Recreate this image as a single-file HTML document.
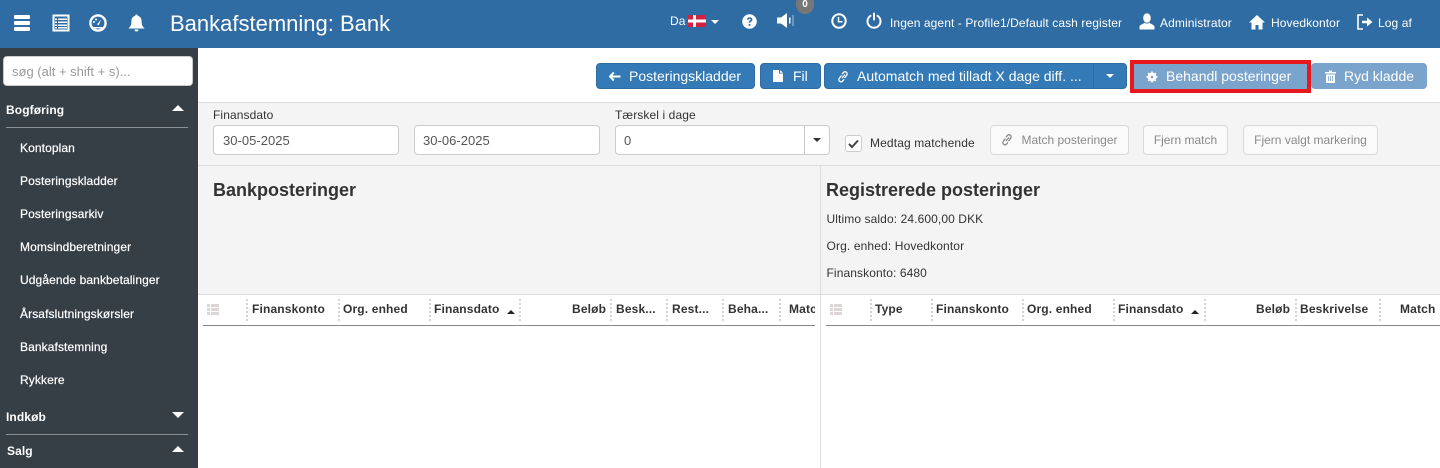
<!DOCTYPE html>
<html lang="da"><head><meta charset="utf-8"><title>Bankafstemning</title>
<style>
*{box-sizing:border-box}
html,body{margin:0;padding:0;width:1440px;height:468px;overflow:hidden;background:#fff;font-family:"Liberation Sans",Arial,sans-serif;color:#333}
.a{position:absolute;white-space:nowrap}
.t{position:absolute;white-space:nowrap;line-height:16px}
svg{position:absolute;display:block}
.hd{color:#fff;font-size:12px;top:15px;letter-spacing:.09px}
.nav{color:#fff;font-size:12px;left:20px;font-weight:400;letter-spacing:.1px;-webkit-text-stroke:.2px #fff}
.sec{color:#fff;font-size:12px;font-weight:700;letter-spacing:.1px}
.btn{position:absolute;top:63px;height:26px;background:#337ab7;border:1px solid #2e6da4;border-radius:4px;color:#fff;font-size:14px;line-height:24px;white-space:nowrap}
.inp{position:absolute;background:#fff;border:1px solid #ccc;border-radius:4px;font-size:13px;color:#555;line-height:29px;padding-left:9px;letter-spacing:.03px}
.dis{position:absolute;top:125px;height:30px;background:#fafafa;border:1px solid #d9d9d9;border-radius:4px;font-size:12px;color:#8a8a8a;line-height:28px;white-space:nowrap;text-align:center}
.th{position:absolute;top:302px;font-size:12px;font-weight:700;color:#333;line-height:15px;white-space:nowrap;letter-spacing:.15px}
.sep{position:absolute;top:299px;height:22px;width:0;border-left:2px dotted #d5d5d5}
.car{position:absolute;width:0;height:0;border-left:6px solid transparent;border-right:6px solid transparent}
.lb{font-size:12px;color:#333;letter-spacing:.1px}
</style></head><body>

<!-- top bar -->
<div class="a" style="left:0;top:0;width:1440px;height:48px;background:#2f6ca4"></div>
<div class="a" style="left:14px;top:15px;width:16px;height:4px;background:#fff;border-radius:1px"></div>
<div class="a" style="left:14px;top:21px;width:16px;height:4px;background:#fff;border-radius:1px"></div>
<div class="a" style="left:14px;top:27px;width:16px;height:4px;background:#fff;border-radius:1px"></div>
<svg style="left:52px;top:14px" width="18" height="18" viewBox="0 0 18 18"><rect x=".5" y=".5" width="17" height="17" fill="#fff"/><rect x="2.500" y="2.500" width="13" height="13" fill="#2f6ca4"/><path d="M3 4.500h2v1.500H3zM6 4.500h9v1.500H6zM3 7.500h2v1.500H3zM6 7.500h9v1.500H6zM3 10.500h2V12H3zM6 10.500h9V12H6zM3 13h2v1.500H3zM6 13h9v1.500H6z" fill="#fff"/></svg>
<svg style="left:89px;top:14px" width="18" height="18" viewBox="0 0 18 18"><circle cx="9" cy="9" r="7.600" fill="none" stroke="#fff" stroke-width="2.400"/><path d="M8 10.500 12 5.500 10 11z" fill="#fff"/><circle cx="5" cy="8" r="1" fill="#fff"/><circle cx="7" cy="5.500" r="1" fill="#fff"/><path d="M4.500 13h9v1.500h-9z" fill="#fff"/></svg>
<svg style="left:128px;top:14px" width="17" height="18" viewBox="0 0 17 18"><path d="M8.500 0.500c1 0 1.300.7 1.300 1.400C12.400 2.500 13.600 4.600 13.600 7c0 4 1 5.600 3 7.500H.4c2-1.900 3-3.500 3-7.500 0-2.400 1.200-4.500 3.800-5.100C7.200 1.200 7.500.5 8.500.5z" fill="#fff"/><path d="M6.500 15.500h4c0 1.200-.9 2-2 2s-2-.8-2-2z" fill="#fff"/></svg>
<div class="t" style="left:170px;top:11px;font-size:22px;line-height:25px;color:#fff">Bankafstemning: Bank</div>

<div class="t hd" style="left:670px;top:13px">Da</div>
<svg style="left:688px;top:15px" width="18" height="12" viewBox="0 0 18 12"><rect width="18" height="12" fill="#d4213d"/><rect x="5" width="3" height="12" fill="#fff"/><rect y="4.500" width="18" height="3" fill="#fff"/></svg>
<div class="car" style="left:711px;top:20px;border-left-width:4px;border-right-width:4px;border-top:4px solid #fff"></div>
<svg style="left:742px;top:14px" width="15" height="15" viewBox="0 0 15 15"><circle cx="7.500" cy="7.500" r="7.300" fill="#fff"/><path d="M4.800 5.600C5 4 6.200 3.200 7.600 3.200c1.600 0 2.800 1 2.800 2.400 0 1.200-.8 1.700-1.500 2.200-.4.300-.6.500-.6 1H6.600c0-1 .3-1.500 1-2 .6-.4 1-.7 1-1.200 0-.5-.4-.8-1-.8-.6 0-1 .4-1.100 1zM6.600 10h1.800v1.800H6.600z" fill="#2f6ca4"/></svg>
<svg style="left:777px;top:13px" width="20" height="15" viewBox="0 0 20 15"><path d="M0 4.500h4L10 0v15L4 10.500H0z" fill="#fff"/><rect x="12" y="4.500" width="1.500" height="6" fill="#fff"/><rect x="15.500" y="2" width="1" height="11" fill="#aac4dc"/></svg>
<div class="a" style="left:796px;top:-6px;width:18px;height:20px;background:#777;border-radius:9px;color:#fff;font-size:10px;font-weight:700;text-align:center;line-height:22px">0</div>
<svg style="left:831px;top:13px" width="16" height="16" viewBox="0 0 16 16"><circle cx="8" cy="8" r="6.700" fill="none" stroke="#fff" stroke-width="2"/><path d="M7.500 4v4.800H11.500" fill="none" stroke="#fff" stroke-width="1.500"/></svg>
<svg style="left:866px;top:12px" width="16" height="17" viewBox="0 0 16 17"><path d="M4.500 3.800A6.500 6.500 0 1 0 11.500 3.800" fill="none" stroke="#fff" stroke-width="2" stroke-linecap="round"/><rect x="7" y="0.500" width="2" height="8" rx="1" fill="#fff"/></svg>
<div class="t hd" style="left:890px">Ingen agent - Profile1/Default cash register</div>
<svg style="left:1139px;top:13px" width="16" height="17" viewBox="0 0 16 17"><ellipse cx="8" cy="5" rx="3.800" ry="4.800" fill="#fff"/><path d="M5.500 9.500 C5 11 1 11.500.5 13.500V16.500H15.500V13.500C15 11.500 11 11 10.500 9.500 9 11 7 11 5.500 9.500z" fill="#fff"/></svg>
<div class="t hd" style="left:1160px">Administrator</div>
<svg style="left:1249px;top:14px" width="16" height="16" viewBox="0 0 16 16"><path d="M8 1 16 8.500H13.500V15.500H9.500V11H6.500V15.500H2.500V8.500H0z" fill="#fff"/></svg>
<div class="t hd" style="left:1271px">Hovedkontor</div>
<svg style="left:1357px;top:14px" width="16" height="16" viewBox="0 0 16 16"><path d="M6 1H1V15H6" fill="none" stroke="#fff" stroke-width="1.600"/><path d="M5 6.700h5V3.500L15.500 8 10 12.500V9.300H5z" fill="#fff"/></svg>
<div class="t hd" style="left:1378px">Log af</div>

<!-- sidebar -->
<div class="a" style="left:0;top:48px;width:198px;height:420px;background:#363f46"></div>
<div class="a" style="left:3px;top:56px;width:190px;height:30px;background:#fff;border:1px solid #ccc;border-radius:4px;font-size:13px;line-height:29px;color:#999;padding-left:8px">søg (alt + shift + s)...</div>
<div class="t sec" style="left:6px;top:102px">Bogføring</div>
<div class="car" style="left:172px;top:105px;border-bottom:6px solid #fff"></div>
<div class="a" style="left:6px;top:127px;width:182px;height:1px;background:#8c9196"></div>
<div class="t nav" style="top:140px">Kontoplan</div>
<div class="t nav" style="top:173px">Posteringskladder</div>
<div class="t nav" style="top:206px">Posteringsarkiv</div>
<div class="t nav" style="top:239px">Momsindberetninger</div>
<div class="t nav" style="top:272px">Udgående bankbetalinger</div>
<div class="t nav" style="top:306px">Årsafslutningskørsler</div>
<div class="t nav" style="top:339px">Bankafstemning</div>
<div class="t nav" style="top:372px">Rykkere</div>
<div class="t sec" style="left:6px;top:409px">Indkøb</div>
<div class="car" style="left:172px;top:412px;border-top:6px solid #fff"></div>
<div class="a" style="left:6px;top:434px;width:182px;height:1px;background:#8c9196"></div>
<div class="t sec" style="left:7px;top:443px">Salg</div>
<div class="car" style="left:172px;top:446px;border-bottom:6px solid #fff"></div>

<!-- toolbar -->
<div class="btn" style="left:596px;width:159px;padding-left:32px">Posteringskladder</div>
<svg style="left:609px;top:72px" width="12" height="9" viewBox="0 0 12 9"><path d="M4.800 0.500 1 4.500 4.800 8.500M1.500 4.500H11.500" fill="none" stroke="#fff" stroke-width="2"/></svg>
<div class="btn" style="left:760px;width:61px;padding-left:32px">Fil</div>
<svg style="left:773px;top:70px" width="10" height="12" viewBox="0 0 10 12"><path d="M0 0H6V3.500H10V12H0zM7 0 10 2.800H7z" fill="#fff"/></svg>
<div class="btn" style="left:824px;width:270px;border-radius:4px 0 0 4px;padding-left:32px">Automatch med tilladt X dage diff. ...</div>
<svg style="left:837px;top:70px" width="12" height="13" viewBox="0 0 12 13"><path d="M5 8 8 4.500M4.500 5.500 2.500 8c-1 1.300-.8 2.700.2 3.400 1 .7 2.200.5 3.100-.6L7 9.300M7.500 8l2-2.500c1-1.300.8-2.700-.2-3.400-1-.7-2.200-.5-3.100.6L5 4.200" fill="none" stroke="#fff" stroke-width="1.300"/></svg>
<div class="btn" style="left:1093px;width:34px;border-radius:0 4px 4px 0"></div>
<div class="car" style="left:1106px;top:74px;border-left-width:4px;border-right-width:4px;border-top:4px solid #fff"></div>
<div class="a" style="left:1130px;top:60px;width:181px;height:33px;background:#7ba4cc;border:4px solid #e7191f"></div>
<div class="t" style="left:1166px;top:68px;font-size:14px;color:#fff">Behandl posteringer</div>
<svg style="left:1146px;top:71px" width="12" height="12" viewBox="0 0 12 12"><circle cx="6" cy="6" r="3.300" fill="none" stroke="#fff" stroke-width="2.400"/><path d="M6 .5V11.500M.5 6H11.500M2.100 2.100 9.900 9.900M9.900 2.100 2.100 9.900" stroke="#fff" stroke-width="1.600"/><circle cx="6" cy="6" r="1.300" fill="#7ba4cc"/></svg>
<div class="btn" style="left:1311px;width:116px;background:#7ba4cc;border-color:#7ba4cc;padding-left:32px">Ryd kladde</div>
<svg style="left:1325px;top:70px" width="11" height="13" viewBox="0 0 11 13"><path d="M0 2H4V.5H7V2H11V3.500H0zM1 4.500H10V13H1z" fill="#fff"/><path d="M3.500 6v5M5.500 6v5M7.500 6v5" stroke="#7ba4cc" stroke-width=".8"/></svg>

<!-- filter panel -->
<div class="a" style="left:198px;top:102px;width:1242px;height:366px;background:#f4f4f4"></div>
<div class="a" style="left:198px;top:102px;width:1242px;height:1px;background:#ddd"></div>
<div class="t lb" style="left:213px;top:107px">Finansdato</div>
<div class="inp" style="left:213px;top:125px;width:186px;height:30px">30-05-2025</div>
<div class="inp" style="left:414px;top:125px;width:186px;height:30px;padding-left:8px">30-06-2025</div>
<div class="t lb" style="left:615px;top:107px">Tærskel i dage</div>
<div class="inp" style="left:615px;top:125px;width:215px;height:30px;padding-left:8px">0</div>
<div class="a" style="left:804px;top:126px;width:1px;height:28px;background:#ccc"></div>
<div class="car" style="left:813px;top:138px;border-left-width:4px;border-right-width:4px;border-top:4px solid #333"></div>
<div class="a" style="left:845px;top:135px;width:17px;height:17px;background:#fff;border:1px solid #ccc;border-radius:3px"></div>
<svg style="left:848px;top:139px" width="11" height="10" viewBox="0 0 11 10"><path d="M1 5 4 8 10 1.500" fill="none" stroke="#444" stroke-width="2"/></svg>
<div class="t lb" style="left:870px;top:135px;letter-spacing:.13px">Medtag matchende</div>
<div class="dis" style="left:990px;width:139px;padding-left:20px;">Match posteringer</div>
<svg style="left:1001px;top:133px" width="12" height="13" viewBox="0 0 12 13"><path d="M5 8 8 4.500M4.500 5.500 2.500 8c-1 1.300-.8 2.700.2 3.400 1 .7 2.200.5 3.100-.6L7 9.300M7.500 8l2-2.500c1-1.300.8-2.700-.2-3.400-1-.7-2.200-.5-3.100.6L5 4.200" fill="none" stroke="#888" stroke-width="1.300"/></svg>
<div class="dis" style="left:1143px;width:85px">Fjern match</div>
<div class="dis" style="left:1243px;width:135px">Fjern valgt markering</div>
<div class="a" style="left:198px;top:165px;width:1242px;height:1px;background:#ddd"></div>

<div class="t" style="left:213px;top:180px;font-size:18px;line-height:21px;font-weight:700;color:#333">Bankposteringer</div>
<div class="t" style="left:826px;top:180px;font-size:18px;line-height:21px;font-weight:700;color:#333">Registrerede posteringer</div>
<div class="t lb" style="left:826.500px;top:211px">Ultimo saldo: 24.600,00 DKK</div>
<div class="t lb" style="left:826.500px;top:238px;letter-spacing:.13px">Org. enhed: Hovedkontor</div>
<div class="t lb" style="left:826.500px;top:265px">Finanskonto: 6480</div>

<!-- tables -->
<div class="a" style="left:198px;top:294px;width:1242px;height:174px;background:#fff"></div>
<div class="a" style="left:198px;top:294px;width:1242px;height:1px;background:#ddd"></div>
<div class="a" style="left:820px;top:166px;width:1px;height:302px;background:#ddd"></div>

<svg style="left:207px;top:304px" width="12" height="11" viewBox="0 0 12 11"><path d="M0 0h3v3H0zM4 0h8v3H4zM0 4h3v3H0zM4 4h8v3H4zM0 8h3v3H0zM4 8h8v3H4z" fill="#ddd6d6"/></svg>
<div class="th" style="left:252px">Finanskonto</div>
<div class="sep" style="left:246px"></div>
<div class="sep" style="left:338px"></div>
<div class="th" style="left:343px">Org. enhed</div>
<div class="sep" style="left:429px"></div>
<div class="th" style="left:434px">Finansdato</div>
<div class="car" style="left:507px;top:310px;border-left-width:4px;border-right-width:4px;border-bottom:4px solid #222"></div>
<div class="sep" style="left:519px"></div>
<div class="th" style="left:572px">Beløb</div>
<div class="sep" style="left:610px"></div>
<div class="th" style="left:616px">Besk...</div>
<div class="sep" style="left:666px"></div>
<div class="th" style="left:672px">Rest...</div>
<div class="sep" style="left:722px"></div>
<div class="th" style="left:728px">Beha...</div>
<div class="sep" style="left:779px"></div>
<div class="th" style="left:789px;width:26px;overflow:hidden">Match</div>
<div class="a" style="left:203px;top:325px;width:612px;height:1px;background:#888"></div>

<svg style="left:830px;top:304px" width="12" height="11" viewBox="0 0 12 11"><path d="M0 0h3v3H0zM4 0h8v3H4zM0 4h3v3H0zM4 4h8v3H4zM0 8h3v3H0zM4 8h8v3H4z" fill="#ddd6d6"/></svg>
<div class="sep" style="left:870px"></div>
<div class="th" style="left:875px">Type</div>
<div class="sep" style="left:931px"></div>
<div class="th" style="left:936px">Finanskonto</div>
<div class="sep" style="left:1022px"></div>
<div class="th" style="left:1027px">Org. enhed</div>
<div class="sep" style="left:1113px"></div>
<div class="th" style="left:1118px">Finansdato</div>
<div class="car" style="left:1191px;top:310px;border-left-width:4px;border-right-width:4px;border-bottom:4px solid #222"></div>
<div class="sep" style="left:1204px"></div>
<div class="th" style="left:1256px">Beløb</div>
<div class="sep" style="left:1295px"></div>
<div class="th" style="left:1300px">Beskrivelse</div>
<div class="sep" style="left:1379px"></div>
<div class="th" style="left:1400px">Match</div>
<div class="a" style="left:826px;top:325px;width:614px;height:1px;background:#888"></div>

</body></html>
